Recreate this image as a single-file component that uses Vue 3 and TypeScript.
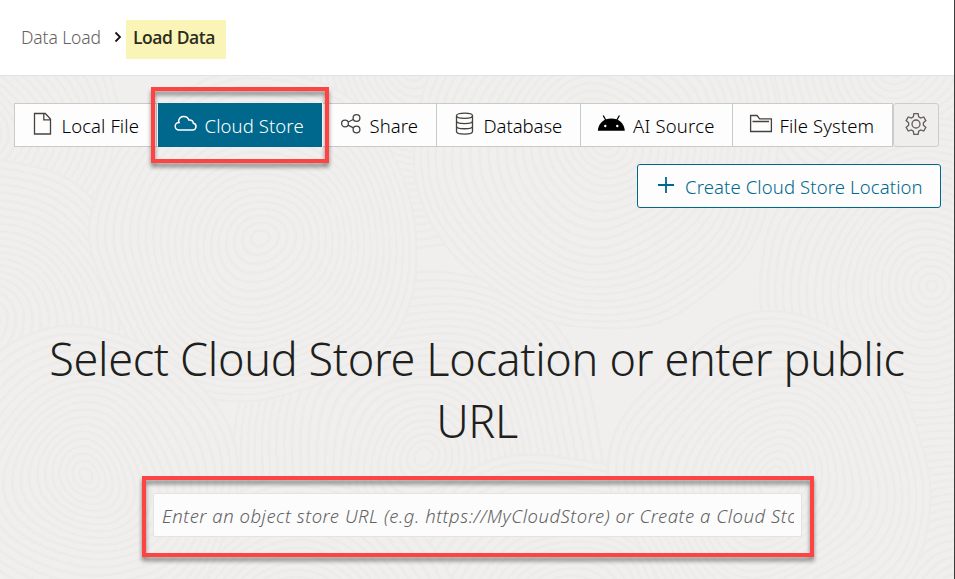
<script setup lang="ts">
interface Tab {
  id: string
  label: string
  active?: boolean
}

interface Swirl {
  cx: number
  cy: number
  radii: number[]
}

const tabs: Tab[] = [
  { id: 'file', label: 'Local File' },
  { id: 'cloud', label: 'Cloud Store', active: true },
  { id: 'share', label: 'Share' },
  { id: 'database', label: 'Database' },
  { id: 'ai', label: 'AI Source' },
  { id: 'folder', label: 'File System' },
]

function swirl(cx: number, cy: number, size: number): Swirl {
  const radii: number[] = []
  for (let r = size; r > 4; r -= 7.5) radii.push(r)
  return { cx, cy, radii }
}

// Later swirls overlap the earlier ones, like stacked discs.
const swirls: Swirl[] = [
  swirl(-30, 130, 150),
  swirl(420, 60, 190),
  swirl(900, 60, 180),
  swirl(930, 290, 170),
  swirl(-20, 330, 170),
  swirl(420, 460, 190),
  swirl(602, 148, 180),
  swirl(258, 240, 165),
  swirl(955, 600, 180),
  swirl(560, 620, 170),
  swirl(300, 640, 160),
  swirl(85, 480, 150),
  swirl(773, 480, 160),
]
</script>

<template>
  <div class="page">
    <header class="header">
      <nav class="crumbs">
        <a class="crumb">Data Load</a>
        <svg class="chevron" viewBox="0 0 8 12"><path d="M1.500 1.500 6 6l-4.500 4.500" /></svg>
        <span class="current">Load Data</span>
      </nav>
    </header>

    <main class="main">
      <svg class="texture" viewBox="0 76 954 503" preserveAspectRatio="none">
        <filter id="wobble" x="-10%" y="-10%" width="120%" height="120%">
          <feTurbulence type="fractalNoise" baseFrequency="0.008" numOctaves="1" seed="4" />
          <feDisplacementMap in="SourceGraphic" scale="40" xChannelSelector="R" yChannelSelector="G" />
        </filter>
        <g filter="url(#wobble)">
          <g v-for="(s, i) in swirls" :key="i">
            <circle v-for="r in s.radii" :key="r" :cx="s.cx" :cy="s.cy" :r="r" />
          </g>
        </g>
      </svg>

      <div class="toolbar">
        <div class="tabs">
          <button v-for="t in tabs" :key="t.id" class="tab" :class="[t.id, { active: t.active }]">
            <svg v-if="t.id === 'file'" class="icon" viewBox="0 0 24 24">
              <path d="M3.500 2.500h10.800l5.200 5.500v15h-16z M12.800 2.500v6.300h6.700" />
            </svg>
            <svg v-else-if="t.id === 'cloud'" class="icon" viewBox="0 0 24 24">
              <path d="M5 19h13.600a3.400 3.400 0 0 0 .8-6.700q-.5-3.600-4.500-3.200A5.400 5.400 0 0 0 4.600 9.600q0 .9.400 1.800A3.800 3.800 0 0 0 5 19z" />
            </svg>
            <svg v-else-if="t.id === 'share'" class="icon" viewBox="0 0 24 24">
              <circle cx="6" cy="12.500" r="3.400" /><circle cx="17.500" cy="7" r="3.400" /><circle cx="17.500" cy="18.500" r="3.400" />
              <path d="m9.200 11 5.100-2.500M9 14.200l5.500 2.700" />
            </svg>
            <svg v-else-if="t.id === 'database'" class="icon" viewBox="0 0 24 24">
              <ellipse cx="11.500" cy="4.800" rx="8" ry="2.600" />
              <path d="M3.500 4.800v15.600c0 3.500 16 3.500 16 0V4.800M3.500 10c0 3.400 16 3.400 16 0M3.500 15.200c0 3.400 16 3.400 16 0" />
            </svg>
            <svg v-else-if="t.id === 'ai'" class="icon android" viewBox="0 0 28 24">
              <path class="solid" d="M.8 19.800C1.400 12 7 7.500 14.300 7.500S27.200 12 27.800 19.800z" />
              <path d="m9 9.500-2.800-5M19.600 9.500l2.800-5" />
              <circle class="eye" cx="8.300" cy="15" r="1.200" /><circle class="eye" cx="20.300" cy="15" r="1.200" />
            </svg>
            <svg v-else class="icon" viewBox="0 0 24 24">
              <path d="M1.600 20.500v-16h6.500l2.500 3.300h11.800v12.700zM3.500 10.500h16.500" />
            </svg>
            <span>{{ t.label }}</span>
          </button>
        </div>
        <button class="settings" aria-label="Settings">
          <svg class="icon" viewBox="0 0 24 24">
            <path d="M9.900 1.700h4.200l.6 3.200 2 1.150 3.050-1.080 2.100 3.640-2.460 2.130v2.520l2.460 2.130-2.100 3.640-3.050-1.080-2 1.150-.6 3.200H9.900l-.6-3.200-2-1.150-3.050 1.080-2.100-3.640 2.460-2.130v-2.520L2.150 8.610l2.100-3.640L7.300 6.050l2-1.150z" />
            <circle cx="12" cy="12" r="4" />
          </svg>
        </button>
      </div>

      <div class="actions">
        <button class="create">
          <svg class="plus" viewBox="0 0 16 16"><path d="M8 0v16M0 8h16" /></svg>
          <span>Create Cloud Store Location</span>
        </button>
      </div>

      <h1 class="title">Select Cloud Store Location or enter public URL</h1>

      <div class="field">
        <span class="hint">Enter an object store URL (e.g. https://MyCloudStore) or Create a Cloud Store Location</span>
      </div>
    </main>

    <div class="frame frame-tab"></div>
    <div class="frame frame-field"></div>
  </div>
</template>

<style>
body {
  margin: 0;
  overflow: hidden;
}
</style>

<style scoped>
.page {
  position: relative;
  box-sizing: border-box;
  width: 955px;
  height: 579px;
  display: flex;
  flex-direction: column;
  overflow: hidden;
  border-right: 1px solid #3c3c3c;
  background: #fff;
  font-family: 'Noto Sans', 'Open Sans', sans-serif;
  font-weight: 350;
  color: #161513;
}

button {
  margin: 0;
  font: inherit;
  color: inherit;
}

.header {
  box-sizing: border-box;
  height: 76px;
  padding: 20px 0 0 21px;
  border-bottom: 1px solid #e3e1df;
  background: #fff;
}

.crumbs {
  display: flex;
  align-items: center;
  height: 39px;
}

.crumb {
  width: 93px;
  padding-bottom: 4px;
  font-size: 17.5px;
  line-height: 35px;
  letter-spacing: -0.1px;
  white-space: nowrap;
  color: #64615e;
}

.chevron {
  width: 8px;
  height: 12px;
  margin: 0 4px 5px 0;
  fill: none;
  stroke: #161513;
  stroke-width: 1.8;
}

.current {
  box-sizing: border-box;
  width: 100px;
  height: 39px;
  padding-left: 7px;
  background: #faf4b7;
  font-family: 'Open Sans', 'Noto Sans', sans-serif;
  font-size: 17.5px;
  font-weight: 600;
  line-height: 35px;
  letter-spacing: -0.42px;
  white-space: nowrap;
  color: #2c2b20;
}

.main {
  position: relative;
  flex: 1;
  display: flex;
  flex-direction: column;
  background: #f0efed;
}

.texture {
  position: absolute;
  inset: 0;
  width: 954px;
  height: 503px;
}

.texture circle {
  fill: #f0efed;
  stroke: #ecebe9;
  stroke-width: 2.4;
}

.toolbar,
.actions,
.title,
.field {
  position: relative;
}

.toolbar {
  display: flex;
  height: 44px;
  margin: 27px 0 0 14px;
}

.tabs {
  box-sizing: border-box;
  display: grid;
  grid-template-columns: 142px 166px 114px 144px 152px 159px;
  border: 1px solid #c9cacc;
  background: #fdfdfd;
}

.tab {
  display: flex;
  align-items: center;
  gap: 6.5px;
  padding: 0 0 0 16px;
  border: 0;
  border-right: 1px solid #c9cacc;
  background: none;
  font-size: 18.5px;
  letter-spacing: 0.1px;
  white-space: nowrap;
  color: #000;
}

.tab:last-child {
  border-right: 0;
}

.tab.database {
  letter-spacing: -0.05px;
}

.tab.ai {
  gap: 8px;
  letter-spacing: 0.2px;
}

.tab.active {
  margin: -1px 0 -1px 1px;
  border-right-color: #fff;
  background: #00688c;
  color: #fff;
}

.icon {
  flex: none;
  width: 24px;
  height: 24px;
  margin-bottom: 4px;
  fill: none;
  stroke: #45423f;
  stroke-width: 1.3;
}

.active .icon {
  stroke: #fff;
  stroke-width: 1.5;
}

.android {
  width: 28px;
  stroke: #000;
}

.solid {
  fill: #000;
  stroke: none;
}

.eye {
  fill: #fff;
  stroke: none;
}

.settings {
  box-sizing: border-box;
  display: flex;
  align-items: center;
  justify-content: center;
  width: 46px;
  padding: 0;
  border: 1px solid #cdcdcc;
  border-radius: 3px;
  background: #efeeec;
}

.settings .icon {
  margin: 0 0 2px;
  stroke: #5f5c59;
}

.actions {
  display: flex;
  justify-content: flex-end;
  margin: 17px 13px 0 0;
}

.create {
  box-sizing: border-box;
  display: flex;
  align-items: center;
  gap: 11px;
  width: 304px;
  height: 44px;
  padding: 0 0 0 20px;
  border: 1px solid #00688c;
  border-radius: 3px;
  background: #fdfdfd;
  font-size: 18.5px;
  letter-spacing: 0.12px;
  white-space: nowrap;
  color: #00688c;
}

.plus {
  width: 16px;
  height: 16px;
  margin-bottom: 2px;
  stroke: currentColor;
  stroke-width: 1.8;
}

.title {
  margin: 120px 0 0;
  padding: 0 40px;
  font-size: 45px;
  font-weight: 300;
  line-height: 62px;
  letter-spacing: -0.34px;
  text-align: center;
  color: #201f1e;
}

.field {
  box-sizing: border-box;
  display: flex;
  align-items: center;
  width: 649px;
  height: 44px;
  margin: 41px 0 0 153px;
  padding: 0 7px 0 8px;
  border: 1px solid #e4e3e1;
  border-radius: 2px;
  background: #fcfcfc;
}

.hint {
  flex: 1;
  overflow: hidden;
  padding-top: 2px;
  font-size: 18.5px;
  font-style: italic;
  letter-spacing: 0.52px;
  line-height: 30px;
  white-space: nowrap;
  color: #626262;
}

.frame {
  position: absolute;
  box-sizing: border-box;
  border: 4px solid #ff4343;
  filter: drop-shadow(0 4px 2px rgba(0, 0, 0, 0.45));
}

.frame-tab {
  left: 151px;
  top: 87px;
  width: 178px;
  height: 76px;
}

.frame-field {
  left: 142px;
  top: 476px;
  width: 672px;
  height: 81px;
}
</style>
